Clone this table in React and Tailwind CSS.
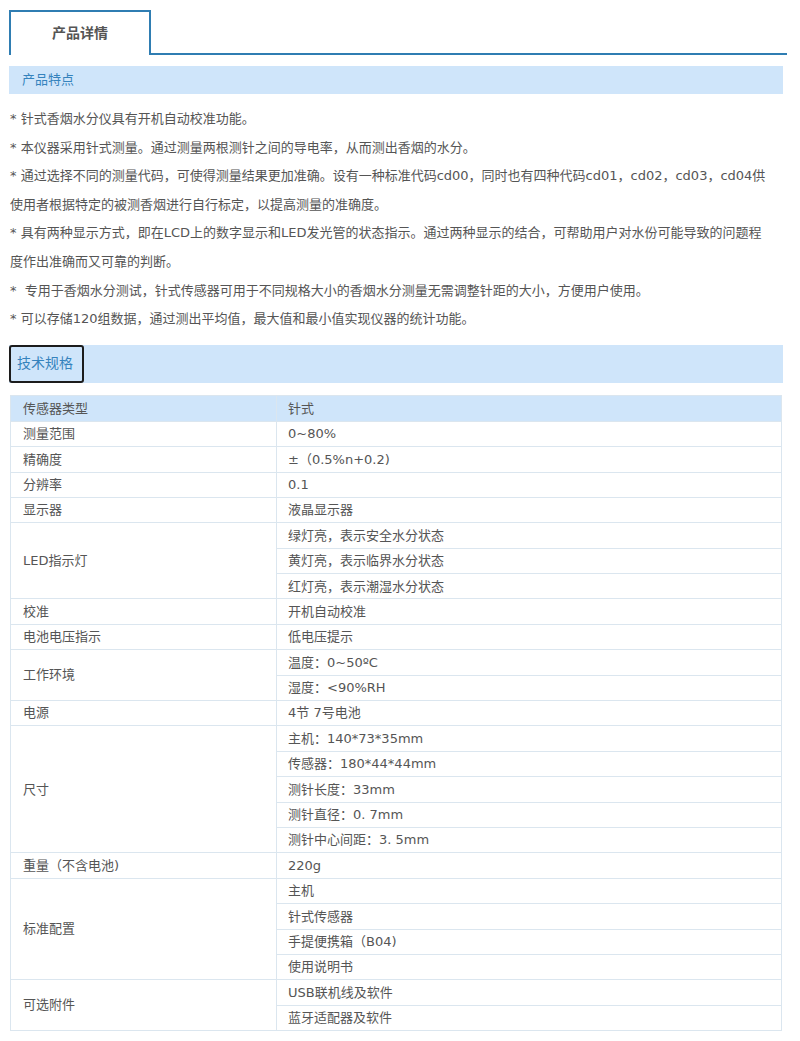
import React from "react";

const font = { fontFamily: '"DejaVu Sans", "Noto Sans CJK SC", sans-serif' };

const rows = [
  ["测量范围", ["0~80%"]],
  ["精确度", ["±（0.5%n+0.2)"]],
  ["分辨率", ["0.1"]],
  ["显示器", ["液晶显示器"]],
  ["LED指示灯", ["绿灯亮，表示安全水分状态", "黄灯亮，表示临界水分状态", "红灯亮，表示潮湿水分状态"]],
  ["校准", ["开机自动校准"]],
  ["电池电压指示", ["低电压提示"]],
  ["工作环境", ["温度：0~50ºC", "湿度：<90%RH"]],
  ["电源", ["4节 7号电池"]],
  ["尺寸", ["主机：140*73*35mm", "传感器：180*44*44mm", "测针长度：33mm", "测针直径：0. 7mm", "测针中心间距：3. 5mm"]],
  ["重量（不含电池)", ["220g"]],
  ["标准配置", ["主机", "针式传感器", "手提便携箱（B04)", "使用说明书"]],
  ["可选附件", ["USB联机线及软件", "蓝牙适配器及软件"]],
];

const lines = [
  "* 针式香烟水分仪具有开机自动校准功能。",
  "* 本仪器采用针式测量。通过测量两根测针之间的导电率，从而测出香烟的水分。",
  "* 通过选择不同的测量代码，可使得测量结果更加准确。设有一种标准代码cd00，同时也有四种代码cd01，cd02，cd03，cd04供",
  "使用者根据特定的被测香烟进行自行标定，以提高测量的准确度。",
  "* 具有两种显示方式，即在LCD上的数字显示和LED发光管的状态指示。通过两种显示的结合，可帮助用户对水份可能导致的问题程",
  "度作出准确而又可靠的判断。",
  "*  专用于香烟水分测试，针式传感器可用于不同规格大小的香烟水分测量无需调整针距的大小，方便用户使用。",
  "* 可以存储120组数据，通过测出平均值，最大值和最小值实现仪器的统计功能。",
];

export default function App() {
  const body = [];
  rows.forEach(([k, vals], i) => {
    vals.forEach((v, j) => {
      body.push(
        <tr key={i + "-" + j} className="h-[25.4px]">
          {j === 0 && (
            <td rowSpan={vals.length} className="border border-[#dbe6ef] pl-3 align-middle w-[266px]">
              {k}
            </td>
          )}
          <td className="border border-[#dbe6ef] pl-[11px] align-middle">{v}</td>
        </tr>
      );
    });
  });

  return (
    <div className="w-[800px] h-[1041px] bg-white text-[#555] overflow-hidden" style={font}>
      <div className="pt-[10px] flex pl-[9px] pr-[13px]">
        <div className="w-[142px] h-[45px] border-t-2 border-l-2 border-r-2 border-[#2f7db2] flex items-center justify-center text-[14px] font-bold text-[#555]">
          产品详情
        </div>
        <div className="flex-1 border-b-2 border-[#2f7db2]"></div>
      </div>
      <div className="mt-[11px] mx-[9px] mr-[17px] h-[28px] bg-[#cfe5fa] flex items-center pl-[13px] text-[13px] text-[#3583bd]">
        产品特点
      </div>
      <div className="pl-[10px] pt-[11px] text-[13px] leading-[28.6px] whitespace-pre">
        {lines.map((l, i) => (
          <div key={i}>{l}</div>
        ))}
      </div>
      <div className="mt-[11px] ml-[9px] mr-[17px] h-[38px] bg-[#cfe5fa] flex">
        <div className="w-[75px] h-[38px] border-2 border-[#1c1c1c] rounded-[3px] flex items-center pl-[6px] text-[14px] text-[#3583bd]">
          技术规格
        </div>
      </div>
      <table className="mt-[12px] ml-[10px] w-[772px] border-collapse text-[13px]">
        <tbody>
          <tr className="h-[26px] bg-[#cfe5fa]">
            <td className="border border-[#dbe6ef] pl-3 w-[266px]">传感器类型</td>
            <td className="border border-[#dbe6ef] pl-[11px]">针式</td>
          </tr>
          {body}
        </tbody>
      </table>
    </div>
  );
}
